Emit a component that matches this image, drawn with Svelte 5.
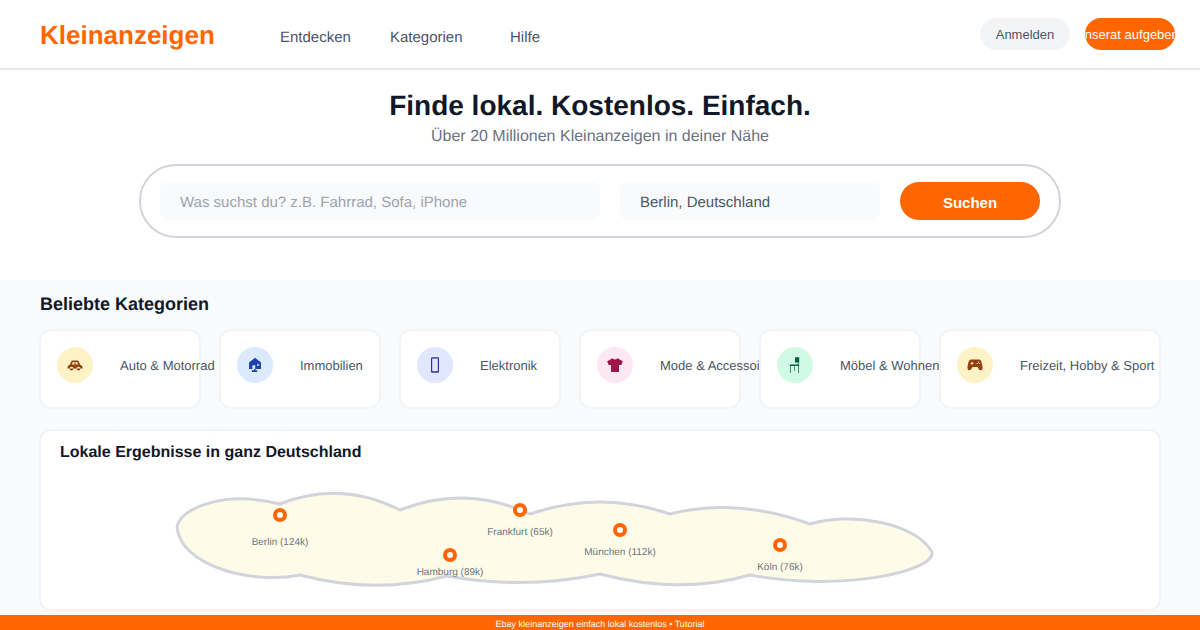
<script>
  const nav = [
    { label: 'Entdecken', width: 110 },
    { label: 'Kategorien', width: 120 },
    { label: 'Hilfe', width: 60 }
  ];

  // d is drawn in the icon colour, cut in the colour of the circle behind it
  const categories = [
    {
      name: 'Auto & Motorrad',
      tone: 'amber',
      d: 'M.5 10.2Q.5 8.2 2.8 7.7L4.2 4.6Q4.7 3.4 6 3.4H10Q11.3 3.4 11.8 4.6L13.2 7.7Q15.5 8.2 15.5 10.2V11.6H.5ZM2.6 11.6a1.9 1.9 0 1 0 3.8 0a1.9 1.9 0 1 0 -3.8 0ZM9.6 11.6a1.9 1.9 0 1 0 3.8 0a1.9 1.9 0 1 0 -3.8 0Z',
      cut: 'M5 7.4L5.8 5.1H7.5V7.4ZM8.5 5.1H10.2L11 7.4H8.5Z'
    },
    {
      name: 'Immobilien',
      tone: 'blue',
      d: 'M8 .8L14 5.6V12H2V5.6ZM7 12H8.5V13.2H10.2V15H4.8V13.2H7Z',
      cut: 'M5.4 8.2H8.2V12H5.4ZM10 6.8H10.9V7.7H10ZM11.3 6.8H12.2V7.7H11.3ZM10 8.1H10.9V9H10ZM11.3 8.1H12.2V9H11.3Z'
    },
    {
      name: 'Elektronik',
      tone: 'indigo',
      d: 'M5.2 .2H10.8Q12 .2 12 1.4V14.6Q12 15.8 10.8 15.8H5.2Q4 15.8 4 14.6V1.4Q4 .2 5.2 .2Z',
      cut: 'M5.2 1.6H10.8V14.2H5.2Z'
    },
    {
      name: 'Mode & Accessoires',
      tone: 'pink',
      d: 'M5.4 1.2L.2 4.2L1.6 8H4V15H12V8H14.4L15.8 4.2L10.6 1.2Q8 3.8 5.4 1.2Z'
    },
    {
      name: 'Möbel & Wohnen',
      tone: 'green',
      d: 'M8 .2H12.2V5.4H11.5V7.4H12.2V9H11.7V16H11V9H8V14H7.4V9H3.8V16H3.1V9H2.8V7.4H10.7V5.4H8Z'
    },
    {
      name: 'Freizeit, Hobby & Sport',
      tone: 'amber',
      d: 'M4 2.5H12Q14 2.5 14.8 6L15.6 10.5Q15.6 13.2 13.6 13.2Q12.2 13.2 11 11L10.5 10H5.5L5 11Q3.8 13.2 2.4 13.2Q.4 13.2 .4 10.5L1.2 6Q2 2.5 4 2.5Z',
      cut: 'M3.6 5.8H4.5V4.9H5.5V5.8H6.4V6.8H5.5V7.7H4.5V6.8H3.6ZM11 4.8h1v1h-1ZM9.7 6.1h1v1h-1ZM12.2 6.1h1v1h-1Z'
    }
  ];

  // page coordinates, the svg viewBox starts at the map's own corner
  const pins = [
    { x: 280, y: 515, labelY: 545, label: 'Berlin (124k)' },
    { x: 450, y: 555, labelY: 575, label: 'Hamburg (89k)' },
    { x: 520, y: 510, labelY: 535, label: 'Frankfurt (65k)' },
    { x: 620, y: 530, labelY: 555, label: 'München (112k)' },
    { x: 780, y: 545, labelY: 570, label: 'Köln (76k)' }
  ];

  const outline =
    'M280 504 Q340 480 400 510 Q465 484 530 514 Q600 490 670 514 Q735 497 810 524 C850 512 915 522 932 552 C935 572 840 592 750 575 Q680 595 600 574 Q525 590 447 576 Q375 595 300 575 C250 585 180 565 177 527 C180 508 225 490 280 504 Z';
</script>

<div class="page">
  <header class="topbar">
    <div class="logo">Kleinanzeigen</div>
    <nav class="nav">
      {#each nav as item}
        <a href="#top" style="width: {item.width}px">{item.label}</a>
      {/each}
    </nav>
    <div class="actions">
      <button class="btn btn-light">Anmelden</button>
      <button class="btn btn-orange">Inserat aufgeben</button>
    </div>
  </header>

  <section class="hero">
    <h1>Finde lokal. Kostenlos. Einfach.</h1>
    <p>Über 20 Millionen Kleinanzeigen in deiner Nähe</p>
    <div class="search">
      <div class="field field-what">Was suchst du? z.B. Fahrrad, Sofa, iPhone</div>
      <div class="field field-where">Berlin, Deutschland</div>
      <button class="search-btn">Suchen</button>
    </div>
  </section>

  <main class="content">
    <h2>Beliebte Kategorien</h2>
    <div class="categories">
      {#each categories as cat}
        <div class="category">
          <span class="cat-icon {cat.tone}">
            <svg viewBox="0 0 16 16" width="16" height="16" aria-hidden="true">
              <path class="ink" d={cat.d} />
              {#if cat.cut}<path class="cut" d={cat.cut} />{/if}
            </svg>
          </span>
          <span class="cat-name">{cat.name}</span>
        </div>
      {/each}
    </div>

    <div class="map-card">
      <h3>Lokale Ergebnisse in ganz Deutschland</h3>
      <svg class="map" viewBox="41 480 1118 129" width="1118" height="129" role="img" aria-label="Karte">
        <path class="land" d={outline} />
        {#each pins as pin}
          <circle class="pin" cx={pin.x} cy={pin.y} r="5" />
          <text class="pin-label" x={pin.x} y={pin.labelY} text-anchor="middle">{pin.label}</text>
        {/each}
      </svg>
    </div>
  </main>

  <footer class="footer">Ebay kleinanzeigen einfach lokal kostenlos • Tutorial</footer>
</div>

<style>
  :global(body) {
    margin: 0;
    font-family: "Liberation Sans", Arial, sans-serif;
    text-rendering: geometricPrecision;
  }

  .page {
    width: 1200px;
    height: 630px;
    display: flex;
    flex-direction: column;
    overflow: hidden;
    background: #fff;
  }

  .topbar {
    height: 70px;
    box-sizing: border-box;
    flex: none;
    display: flex;
    align-items: center;
    padding: 0 25px 0 40px;
    border-bottom: 2px solid #e5e7eb;
  }

  .logo {
    width: 240px;
    padding-top: 2px;
    font-size: 26px;
    font-weight: 700;
    color: #ff6600;
  }

  .nav {
    display: flex;
    padding-top: 6px;
    font-size: 15px;
  }

  .nav a {
    color: #4b5563;
    text-decoration: none;
  }

  .actions {
    margin-left: auto;
    display: flex;
    gap: 15px;
  }

  .btn {
    width: 90px;
    height: 32px;
    border: 0;
    padding: 0;
    border-radius: 16px;
    font: 13px "Liberation Sans", Arial, sans-serif;
    display: flex;
    align-items: center;
    justify-content: center;
    white-space: nowrap;
    overflow: hidden;
  }

  .btn-light {
    background: #f3f4f6;
    color: #4b5563;
  }

  .btn-orange {
    background: #ff6600;
    color: #fff;
  }

  .hero {
    height: 210px;
    flex: none;
    box-sizing: border-box;
    padding-top: 19px;
    text-align: center;
  }

  h1 {
    margin: 0;
    font-size: 28px;
    line-height: 34px;
    color: #111827;
  }

  .hero p {
    margin: 4px 0 0;
    font-size: 16px;
    line-height: 20px;
    color: #6b7280;
  }

  .search {
    width: 922px;
    height: 74px;
    box-sizing: border-box;
    margin: 17px auto 0;
    padding: 0 19px;
    display: flex;
    align-items: center;
    gap: 20px;
    border: 2px solid #d1d5db;
    border-radius: 37px;
    text-align: left;
  }

  .field {
    height: 38px;
    box-sizing: border-box;
    padding: 2px 20px 0;
    display: flex;
    align-items: center;
    background: #f9fafb;
    border-radius: 8px;
    font-size: 15px;
  }

  .field-what {
    width: 440px;
    color: #9ca3af;
  }

  .field-where {
    width: 260px;
    color: #4b5563;
  }

  .search-btn {
    width: 140px;
    height: 38px;
    border: 0;
    padding: 2px 0 0;
    border-radius: 19px;
    background: #ff6600;
    color: #fff;
    font: 700 15px "Liberation Sans", Arial, sans-serif;
  }

  .content {
    flex: 1;
    box-sizing: border-box;
    padding: 14px 39px 0;
    background: #f9fafb;
  }

  h2 {
    margin: 0 0 0 1px;
    font-size: 18px;
    line-height: 21px;
    color: #111827;
  }

  .categories {
    margin-top: 14px;
    display: grid;
    grid-template-columns: repeat(5, 162px) 222px;
    column-gap: 18px;
  }

  .category {
    height: 80px;
    box-sizing: border-box;
    padding: 16px;
    display: flex;
    gap: 27px;
    background: #fff;
    border: 2px solid #f3f4f6;
    border-radius: 12px;
    isolation: isolate;
  }

  .cat-icon {
    width: 36px;
    height: 36px;
    flex: none;
    display: flex;
    align-items: center;
    justify-content: center;
    border-radius: 50%;
    background: var(--tone);
  }

  .amber { --tone: #fef3c7; color: #92400e; }
  .blue { --tone: #dbeafe; color: #1e40af; }
  .indigo { --tone: #e0e7ff; color: #3730a3; }
  .pink { --tone: #fce7f3; color: #9d174d; }
  .green { --tone: #d1fae5; color: #065f46; }

  .ink {
    fill: currentColor;
  }

  .cut {
    fill: var(--tone);
  }

  .cat-name {
    line-height: 38px;
    font-size: 13px;
    color: #4b5563;
    white-space: nowrap;
  }

  .map-card {
    height: 182px;
    box-sizing: border-box;
    margin-top: 20px;
    background: #fff;
    border: 2px solid #f3f4f6;
    border-radius: 12px;
  }

  h3 {
    margin: 0;
    height: 49px;
    box-sizing: border-box;
    padding: 12px 19px 0;
    font-size: 16px;
    line-height: 19px;
    color: #111827;
  }

  .map {
    display: block;
  }

  .land {
    fill: #fefce8;
    stroke: #d1d5db;
    stroke-width: 3;
  }

  .pin {
    fill: #fff;
    stroke: #ff6600;
    stroke-width: 4;
  }

  .pin-label {
    font-size: 10px;
    fill: #6b7280;
  }

  .footer {
    height: 15px;
    flex: none;
    background: #ff6600;
    color: #fff;
    font-size: 9px;
    line-height: 18px;
    text-align: center;
  }
</style>
